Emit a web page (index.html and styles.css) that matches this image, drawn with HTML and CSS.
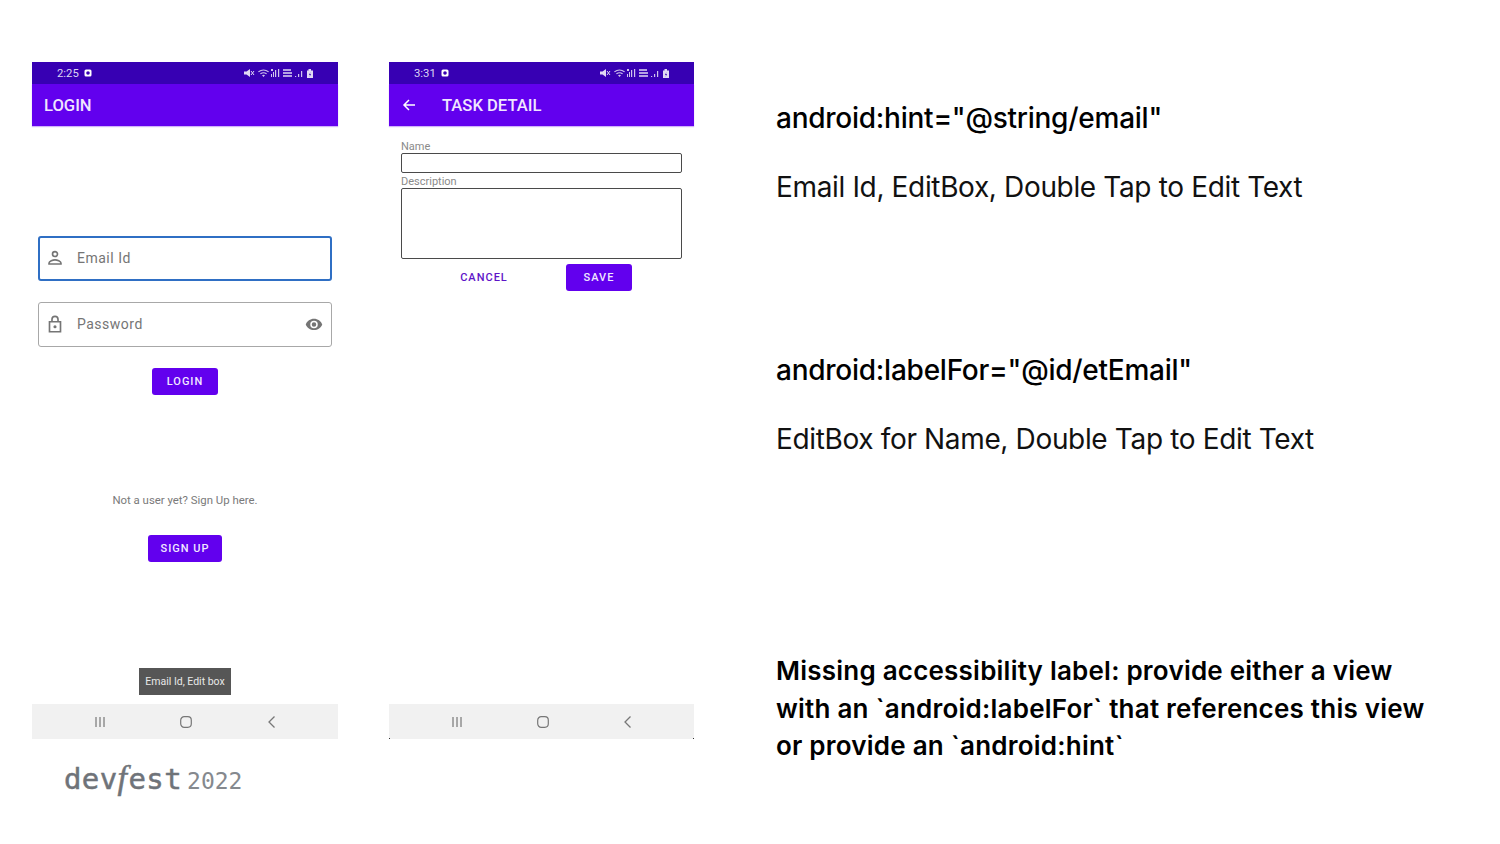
FILE: index.html
```html
<!DOCTYPE html>
<html lang="en">
<head>
<meta charset="utf-8">
<title>Accessibility labels</title>
<link rel="stylesheet" href="styles.css">
</head>
<body>
<main class="slide">
  <div class="phone-col">
    <section class="phone">
      <div class="status">
        <span class="clock">2:25</span>
        <svg class="notif" viewBox="0 0 8 8"><rect x="0.5" y="0.5" width="7" height="7" rx="1.5" fill="#fff"/><circle cx="4" cy="4" r="1.8" fill="#3700b3"/></svg>
        <svg class="sys" viewBox="0 0 70 10"><g fill="#fff"><path d="M0 3.500h2.500L6 1v8L2.500 6.500H0z"/><path d="M7 3l3 4M10 3L7 7" stroke="#fff" stroke-width="1"/><path d="M14 3.500q5.500-4 11 0l-.8.800q-4.700-3.400-9.400 0zM16 5.500q3.500-2.500 7 0l-.8.800q-2.700-2-5.400 0zM18 7.300q1.500-1 3 0L19.500 9z" opacity=".9"/><path d="M27 1h2v2h-2zM27 6h1v3h-1zM29 4h1v5h-1zM31 2h1.200v7H31zM34 1h1.200v8H34z" opacity=".9"/><path d="M39 1h8v2h-8zM39 4h9v2h-9zM39 7h9v2h-9z" opacity=".75"/><path d="M51 8h1.200v1H51zM54 6h1.200v3H54zM57 3h1.200v6H57z" opacity=".9"/><path d="M63 2.500h1.500V1h2.500v1.500H69V10h-6z"/><path d="M66.500 4l-1.500 3h1l-.5 2 1.500-3h-1z" fill="#3700b3"/></g></svg>
      </div>
      <header class="appbar"><h1 class="appbar-title">LOGIN</h1></header>
      <div class="login-body">
        <div class="field field-focus">
          <svg class="field-icon" viewBox="0 0 24 24"><path fill="none" stroke="#757575" stroke-width="1.800" d="M12 5a2.700 2.700 0 1 1 0 5.400a2.700 2.700 0 0 1 0-5.400zM5.500 18.500v-1c0-2.200 4.300-3.500 6.500-3.500s6.500 1.300 6.500 3.500v1z"/></svg>
          <span class="field-text">Email Id</span>
        </div>
        <div class="field">
          <svg class="field-icon" viewBox="0 0 24 24"><path fill="none" stroke="#757575" stroke-width="1.800" d="M6 9.500h12v11H6zM8.700 9.500V7a3.300 3.300 0 0 1 6.600 0v2.500"/><circle cx="12" cy="15" r="1.700" fill="#757575"/></svg>
          <span class="field-text">Password</span>
          <svg class="eye" viewBox="0 0 24 24"><path fill="#757575" d="M12 5C7 5 2.700 8.100 1 12.500 2.700 16.900 7 20 12 20s9.300-3.100 11-7.500C21.300 8.100 17 5 12 5zm0 12.500a5 5 0 1 1 0-10 5 5 0 0 1 0 10zm0-8a3 3 0 1 0 0 6 3 3 0 0 0 0-6z"/></svg>
        </div>
        <button class="btn btn-login">LOGIN</button>
        <p class="signup-hint">Not a user yet? Sign Up here.</p>
        <button class="btn btn-signup">SIGN UP</button>
        <div class="toast">Email Id, Edit box</div>
      </div>
      <nav class="navbar">
        <svg class="nav-icon" viewBox="0 0 14 14"><path fill="none" stroke="#777" stroke-width="1.200" d="M3 2v10M7 2v10M11 2v10"/></svg>
        <svg class="nav-icon" viewBox="0 0 14 14"><rect x="1.700" y="1.700" width="10.600" height="10.600" rx="3.500" fill="none" stroke="#777" stroke-width="1.200"/></svg>
        <svg class="nav-icon" viewBox="0 0 14 14"><path fill="none" stroke="#777" stroke-width="1.300" d="M9.500 1.500L4 7l5.500 5.500"/></svg>
      </nav>
    </section>
    <div class="logo"><span class="logo-name">dev<span class="logo-f">f</span>est</span><span class="logo-year">2022</span></div>
  </div>

  <section class="phone phone-two">
    <div class="status">
      <span class="clock">3:31</span>
      <svg class="notif" viewBox="0 0 8 8"><rect x="0.5" y="0.5" width="7" height="7" rx="1.5" fill="#fff"/><circle cx="4" cy="4" r="1.800" fill="#3700b3"/></svg>
      <svg class="sys" viewBox="0 0 70 10"><g fill="#fff"><path d="M0 3.500h2.500L6 1v8L2.500 6.500H0z"/><path d="M7 3l3 4M10 3L7 7" stroke="#fff" stroke-width="1"/><path d="M14 3.500q5.500-4 11 0l-.8.800q-4.700-3.400-9.400 0zM16 5.500q3.500-2.500 7 0l-.8.800q-2.700-2-5.400 0zM18 7.300q1.500-1 3 0L19.500 9z" opacity=".9"/><path d="M27 1h2v2h-2zM27 6h1v3h-1zM29 4h1v5h-1zM31 2h1.200v7H31zM34 1h1.200v8H34z" opacity=".9"/><path d="M39 1h8v2h-8zM39 4h9v2h-9zM39 7h9v2h-9z" opacity=".75"/><path d="M51 8h1.200v1H51zM54 6h1.200v3H54zM57 3h1.200v6H57z" opacity=".9"/><path d="M63 2.500h1.500V1h2.500v1.500H69V10h-6z"/><path d="M66.500 4l-1.500 3h1l-.5 2 1.500-3h-1z" fill="#3700b3"/></g></svg>
    </div>
    <header class="appbar">
      <svg class="back" viewBox="0 0 14 14"><path fill="none" stroke="#fff" stroke-width="1.500" d="M13 7H2M7 2L2 7l5 5"/></svg>
      <h1 class="appbar-title">TASK DETAIL</h1>
    </header>
    <div class="task-body">
      <label class="task-label">Name</label>
      <div class="task-input"></div>
      <label class="task-label task-label-two">Description</label>
      <div class="task-input task-area"></div>
      <div class="task-actions">
        <button class="btn-text">CANCEL</button>
        <button class="btn btn-save">SAVE</button>
      </div>
    </div>
    <nav class="navbar navbar-ticks">
      <svg class="nav-icon" viewBox="0 0 14 14"><path fill="none" stroke="#777" stroke-width="1.200" d="M3 2v10M7 2v10M11 2v10"/></svg>
      <svg class="nav-icon" viewBox="0 0 14 14"><rect x="1.700" y="1.700" width="10.600" height="10.600" rx="3.500" fill="none" stroke="#777" stroke-width="1.200"/></svg>
      <svg class="nav-icon" viewBox="0 0 14 14"><path fill="none" stroke="#777" stroke-width="1.300" d="M9.500 1.500L4 7l5.500 5.500"/></svg>
    </nav>
  </section>

  <section class="notes">
    <div class="note note-one">
      <p class="note-code">android:hint="@string/email"</p>
      <p class="note-read">Email Id, EditBox, Double Tap to Edit Text</p>
    </div>
    <div class="note note-two">
      <p class="note-code">android:labelFor="@id/etEmail"</p>
      <p class="note-read">EditBox for Name, Double Tap to Edit Text</p>
    </div>
    <p class="note-warning">Missing accessibility label: provide either a view with an `android:labelFor` that references this view or provide an `android:hint`</p>
  </section>
</main>
</body>
</html>
```

FILE: styles.css
```css
* { box-sizing: border-box; }
html, body { margin: 0; padding: 0; background: #fff; }
body { width: 1500px; height: 844px; overflow: hidden; font-family: Roboto, "Liberation Sans", sans-serif; }
p, h1 { margin: 0; }
.slide { display: flex; align-items: flex-start; padding: 62px 0 0 32px; }
.phone-col { width: 306px; }
.phone { display: flex; flex-direction: column; width: 306px; height: 677px; background: #fff; }
.phone-two { width: 305px; margin-left: 51px; }
.status { display: flex; align-items: center; height: 22px; padding: 0 24px 0 25px; background: #3700b3; color: #ddd6f3; font-size: 11.300px; }
.notif { width: 8px; height: 8px; margin-left: 5px; }
.sys { width: 70px; height: 10px; margin-left: auto; opacity: .85; }
.appbar { display: flex; align-items: center; height: 42px; padding: 0 12px; background: #6200ee; color: #f0e6ff; box-shadow: 0 1px 1px rgba(98,0,238,.3); }
.appbar-title { font-size: 16.600px; font-weight: 500; }
.back { width: 14px; height: 14px; margin-right: 26px; margin-left: 1px; }
.login-body { flex: 1; display: flex; flex-direction: column; align-items: center; padding-top: 110px; }
.field { display: flex; align-items: center; width: 294px; height: 45px; padding: 0 8px 1px 5px; border: 1px solid #a8a8a8; border-radius: 3px; margin-bottom: 21px; }
.field-focus { border: 2px solid #2f6fc4; padding-left: 4px; }
.field-icon { width: 22px; height: 22px; margin-right: 11px; }
.field-text { font-size: 14px; letter-spacing: .5px; color: #757575; }
.eye { width: 18px; height: 18px; margin-left: auto; }
.btn { display: block; border: 0; border-radius: 3px; background: #6200ee; color: #f1e8ff; font: 500 11px Roboto, sans-serif; letter-spacing: 1px; padding: 0; }
.btn-login { width: 66px; height: 27px; }
.signup-hint { margin-top: 99px; font-size: 11.400px; color: #7a7a7a; line-height: 13px; }
.btn-signup { width: 74px; height: 27px; margin-top: 28px; }
.toast { margin-top: 106px; width: 92px; height: 27px; background: #565656; color: #e8e8e8; font-size: 10.500px; line-height: 27px; text-align: center; }
.navbar { display: flex; justify-content: space-between; align-items: center; height: 35px; padding: 0 59px 0 61px; background: #f1f1f1; margin-top: auto; }
.navbar-ticks { position: relative; }
.navbar-ticks::before, .navbar-ticks::after { content: ""; position: absolute; bottom: 0; width: 1px; height: 1px; background: #333; }
.navbar-ticks::before { left: 0; }
.navbar-ticks::after { right: 0; }
.nav-icon { width: 14px; height: 14px; }
.logo { display: flex; align-items: baseline; margin: 20px 0 0 32px; color: #6f7379; }
.logo-name { font: 400 29px/40px "DejaVu Sans Mono", monospace; letter-spacing: .4px; -webkit-text-stroke: .5px #6f7379; }
.logo-f { font-family: "Liberation Serif", serif; font-style: italic; font-size: 34px; line-height: 0; margin: 0 1px 0 0; }
.logo-year { font: 400 23px/40px "DejaVu Sans Mono", monospace; color: #85898e; margin-left: 5px; }
.task-body { flex: 1; display: flex; flex-direction: column; padding: 15px 12px 0; }
.task-label { font-size: 11px; line-height: 12px; color: #8a8a8a; }
.task-label-two { margin-top: 3px; }
.task-input { height: 20px; border: 1px solid #4a4a4a; border-radius: 2px; }
.task-area { height: 71px; }
.task-actions { display: flex; align-items: center; margin-top: 5px; }
.btn-text { width: 90px; margin-left: 38px; border: 0; padding: 0; background: none; color: #5e14c8; font: 500 11px Roboto, sans-serif; letter-spacing: 1px; }
.btn-save { width: 66px; height: 27px; margin-left: 37px; }
.notes { width: 680px; margin-left: 82px; color: #111; font-family: Inter, sans-serif; }
.note-code { font-size: 28px; line-height: 38px; font-weight: 500; letter-spacing: -.25px; color: #000; }
.note-read { font-size: 28px; line-height: 38px; margin-top: 31px; font-weight: 400; letter-spacing: -.35px; }
.note-one { padding-top: 37px; }
.note-two { margin-top: 145px; }
.note-warning { width: 660px; margin-top: 194px; font-size: 26px; line-height: 37.500px; font-weight: 600; letter-spacing: .22px; color: #000; }
```
